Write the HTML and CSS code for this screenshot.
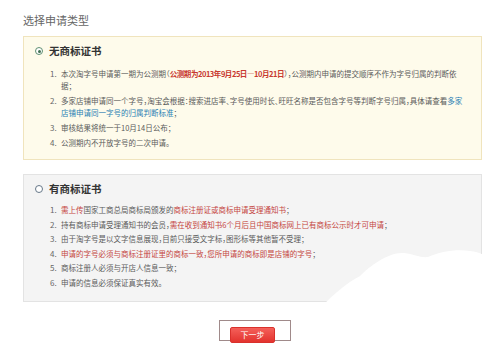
FILE: index.html
```html
<!DOCTYPE html>
<html lang="zh-CN">
<head>
<meta charset="utf-8">
<title>选择申请类型</title>
<link rel="stylesheet" href="styles.css">
</head>
<body>
<div class="page">
  <h1 class="title">选择申请类型</h1>

  <section class="panel panel-notm">
    <div class="panel-head">
      <span class="radio radio-on"></span>
      <span class="panel-title">无商标证书</span>
    </div>
    <ol class="rules rules-a">
      <li><span class="num">1.</span><span class="txt">本次淘字号申请第一期为公测期（<b class="red">公测期为2013年9月25日—10月21日</b>），公测期内申请的提交顺序不作为字号归属的判断依据；</span></li>
      <li><span class="num">2.</span><span class="txt">多家店铺申请同一个字号，淘宝会根据：搜索进店率、字号使用时长、旺旺名称是否包含字号等判断字号归属，具体请查看<a class="link">多家店铺申请同一字号的归属判断标准</a>；</span></li>
      <li><span class="num">3.</span><span class="txt">审核结果将统一于10月14日公布；</span></li>
      <li><span class="num">4.</span><span class="txt">公测期内不开放字号的二次申请。</span></li>
    </ol>
  </section>

  <section class="panel panel-tm">
    <div class="panel-head">
      <span class="radio"></span>
      <span class="panel-title">有商标证书</span>
    </div>
    <ol class="rules rules-b">
      <li><span class="num">1.</span><span class="txt"><span class="red">需上传</span>国家工商总局商标局颁发的<span class="red">商标注册证或商标申请受理通知书</span>；</span></li>
      <li><span class="num">2.</span><span class="txt">持有商标申请受理通知书的会员，<span class="red">需在收到通知书6个月后且中国商标网上已有商标公示时才可申请</span>；</span></li>
      <li><span class="num">3.</span><span class="txt">由于淘字号是以文字信息展现，目前只接受文字标，图形标等其他暂不受理；</span></li>
      <li><span class="num">4.</span><span class="txt"><span class="red">申请的字号必须与商标注册证里的商标一致，您所申请的商标即是店铺的字号</span>；</span></li>
      <li><span class="num">5.</span><span class="txt">商标注册人必须与开店人信息一致；</span></li>
      <li><span class="num">6.</span><span class="txt">申请的信息必须保证真实有效。</span></li>
    </ol>
  </section>

  <div class="actions">
    <div class="btn-frame">
      <button class="btn-next" type="button">下一步</button>
    </div>
  </div>
</div>

<svg class="smudge" width="500" height="349" viewBox="0 0 500 349" aria-hidden="true">
  <path d="M322 349 L322 306 C332 296 346 283 360 276 C370 266 388 252 404 253 C414 254 420 258 428 257 C440 252 455 249 470 251 C480 252 487 256 492 260 L500 262 L500 349 Z" fill="#ffffff"/>
</svg>
</body>
</html>
```

FILE: styles.css
```css
* { box-sizing: border-box; }

html, body {
  margin: 0;
  padding: 0;
  background: #ffffff;
}

body {
  width: 500px;
  height: 349px;
  overflow: hidden;
  position: relative;
  font-family: "Noto Sans CJK SC", "Microsoft YaHei", sans-serif;
  color: #555;
}

.page {
  padding: 13px 18px 0 23px;
}

.title {
  margin: 0 0 9px;
  font-size: 11px;
  line-height: 14px;
  font-weight: normal;
  color: #666;
}

.panel {
  width: 459px;
  border: 1px solid;
  padding: 6px 10px 10px 10px;
}

.panel-notm {
  background: #fefbeb;
  border-color: #f0e4bd;
}

.panel-tm {
  margin-top: 14px;
  background: #f4f4f4;
  border-color: #e3e3e3;
  padding-bottom: 12px;
}

.panel-head {
  display: flex;
  align-items: center;
  height: 16px;
}

.radio {
  width: 8px;
  height: 8px;
  border: 1px solid #667788;
  border-radius: 50%;
  margin: 0 6px 0 1px;
  display: flex;
  align-items: center;
  justify-content: center;
  background: #fff;
}

.radio-on {
  border-color: #5f8f72;
}

.radio-on::after {
  content: "";
  width: 3px;
  height: 3px;
  border-radius: 50%;
  background: #3f6f52;
}

.panel-title {
  font-size: 10.5px;
  line-height: 16px;
  font-weight: bold;
  color: #333;
}

.rules {
  list-style: none;
  margin: 0;
  padding: 0 0 0 16px;
  font-size: 7.5px;
  line-height: 12px;
  font-feature-settings: "halt";
}

.rules-a { margin-top: 9px; }
.rules-b { margin-top: 7px; }

.rules li {
  display: flex;
}

.rules-a li + li { margin-top: 3px; }
.rules-b li + li { margin-top: 2.5px; }

.num {
  flex: none;
  width: 11px;
  color: #666;
  font-size: 8px;
}

.txt {
  width: 404px;
  color: #5a5a5a;
}

.red {
  color: #c4443e;
}

b.red {
  font-weight: bold;
  color: #c8392f;
  letter-spacing: -0.45px;
}

.link {
  color: #2a7fb3;
  text-decoration: none;
}

.actions {
  display: flex;
  justify-content: center;
  margin-top: 18px;
}

.btn-frame {
  width: 72px;
  height: 21px;
  border: 1px solid #a08a8a;
  background: #fff;
  padding: 6px 0 0 10px;
  margin-left: 5px;
}

.btn-next {
  display: block;
  width: 45px;
  height: 16px;
  border: 1px solid #d9312c;
  border-radius: 2px;
  background: linear-gradient(#f4605a, #e3332e);
  color: #fff;
  font-family: "Noto Sans CJK SC", sans-serif;
  font-size: 8px;
  line-height: 14px;
  padding: 0;
}

.smudge {
  position: absolute;
  left: 0;
  top: 0;
  pointer-events: none;
}
```
